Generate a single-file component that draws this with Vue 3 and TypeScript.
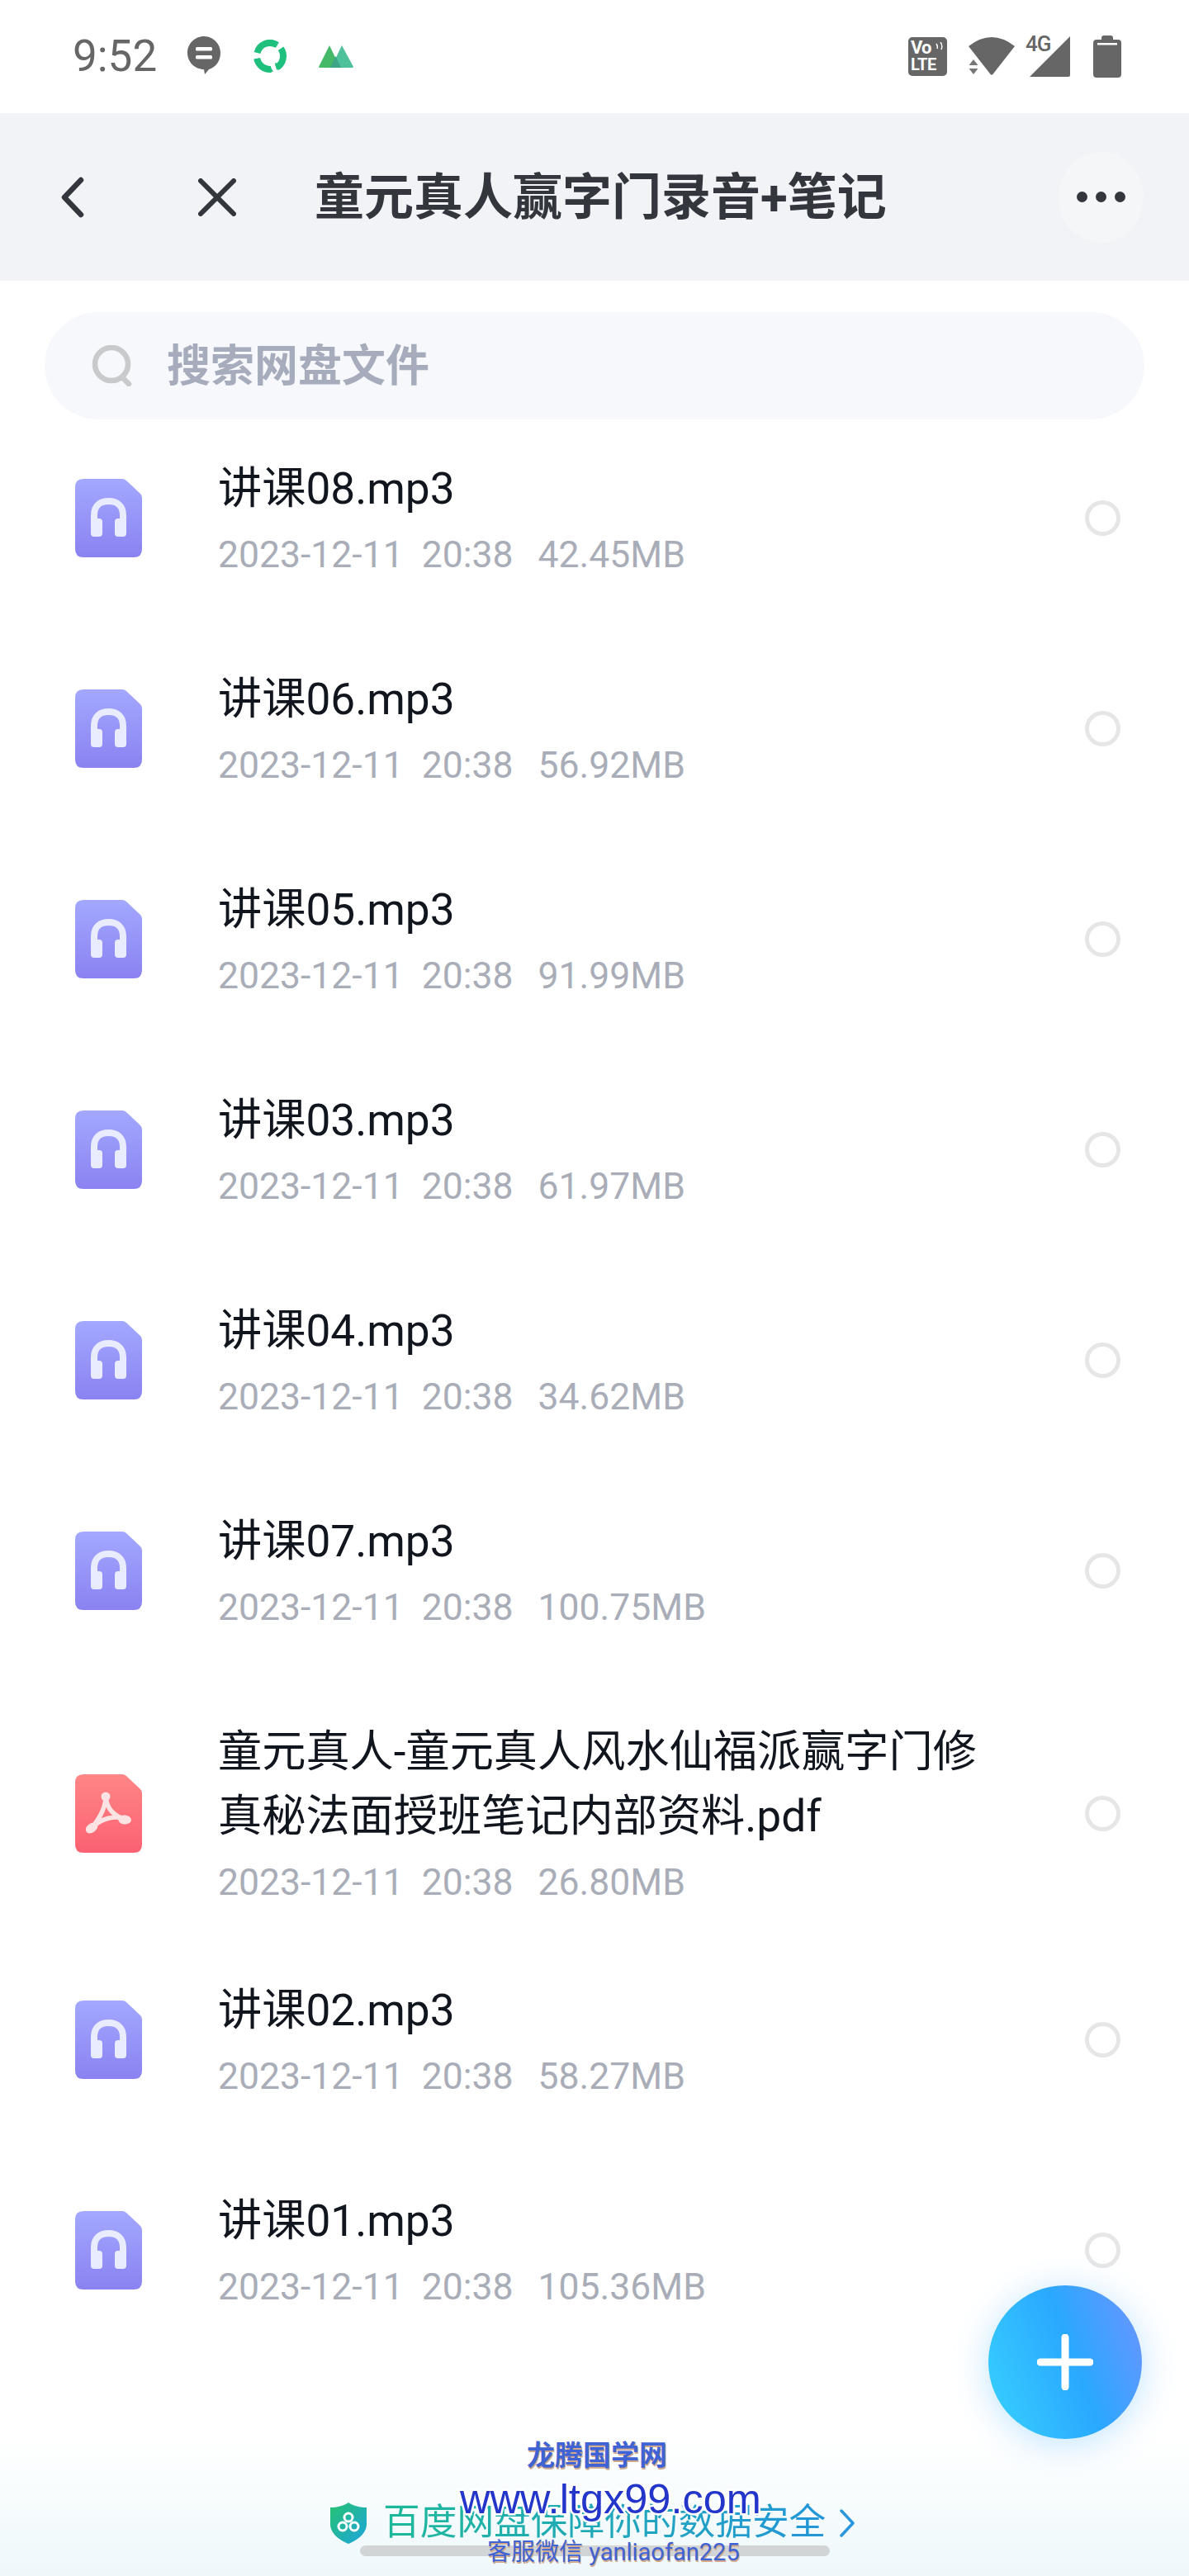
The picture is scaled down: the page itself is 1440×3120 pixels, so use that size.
<script setup lang="ts">
interface FileRow { name: string; size: string; kind: 'audio' | 'pdf' }
const files: FileRow[] = [
  { name: '讲课08.mp3', size: '42.45MB', kind: 'audio' },
  { name: '讲课06.mp3', size: '56.92MB', kind: 'audio' },
  { name: '讲课05.mp3', size: '91.99MB', kind: 'audio' },
  { name: '讲课03.mp3', size: '61.97MB', kind: 'audio' },
  { name: '讲课04.mp3', size: '34.62MB', kind: 'audio' },
  { name: '讲课07.mp3', size: '100.75MB', kind: 'audio' },
  { name: '童元真人-童元真人风水仙福派赢字门修真秘法面授班笔记内部资料.pdf', size: '26.80MB', kind: 'pdf' },
  { name: '讲课02.mp3', size: '58.27MB', kind: 'audio' },
  { name: '讲课01.mp3', size: '105.36MB', kind: 'audio' },
]
</script>

<template>
  <div class="page">
    <div class="status">
      <span class="time">9:52</span>
      <svg class="s-bubble" width="40" height="46" viewBox="0 0 40 46">
        <path d="M20 0C31 0 40 9 40 20C40 31 33 38 26 40L21 46L20 40C9 40 0 31 0 20C0 9 9 0 20 0Z" fill="#666" />
        <rect x="10" y="13" width="20" height="4.5" rx="1.5" fill="#fff" />
        <rect x="10" y="23" width="20" height="4.5" rx="1.5" fill="#fff" />
      </svg>
      <svg class="s-loop" width="44" height="40" viewBox="0 0 44 40">
        <g fill="none" stroke="#1fc07e" stroke-width="8">
          <path d="M6.500 15.900A16 16 0 0 1 30 6.100" />
          <path d="M35.100 10.800A16 16 0 0 1 30 33.900" />
          <path d="M23.400 35.900A16 16 0 0 1 6.200 22.800" />
        </g>
        <path d="M24 4L33 3L29 10Z M36 30L28 28L30 37Z M22 32L17 38L26 39Z" fill="#1fc07e" />
      </svg>
      <svg class="s-mount" width="42" height="27" viewBox="0 0 42 27">
        <path d="M13 0L26 27H1C0 27 0 26 0.500 25Z" fill="#45b968" />
        <path d="M28 0L41.500 25C42 26 42 27 41 27H15Z" fill="#4fc19a" />
        <path d="M20.500 13L27 27H14Z" fill="#3ea588" />
      </svg>
      <div class="status-right">
        <div class="volte">
          <span class="vo">Vo</span>
          <span class="lte">LTE</span>
          <svg class="waves" width="11" height="10" viewBox="0 0 11 10"><path d="M2 2Q4 5 3 8M7 0Q10 4 8 9" fill="none" stroke="#fff" stroke-width="1.500" /></svg>
        </div>
        <svg class="s-wifi" width="56" height="46" viewBox="0 0 56 46">
          <path d="M0 11Q28 -11 56 11L29 45.500H27Z" fill="#666" />
          <path d="M6 27L11.500 34H0.500Z M0.500 38H11.500L6 45Z" fill="#777" />
        </svg>
        <div class="signal">
          <svg width="50" height="50" viewBox="0 0 50 50"><path d="M50 1V48Q50 50 48 50H1Z" fill="#666" /></svg>
          <span class="fourg">4G</span>
        </div>
        <svg class="s-batt" width="34" height="51" viewBox="0 0 34 51">
          <path d="M10 3Q10 0 13 0H21Q24 0 24 3V5H30Q34 5 34 9V47Q34 51 30 51H4Q0 51 0 47V9Q0 5 4 5H10Z" fill="#666" />
          <rect x="5" y="9" width="24" height="2.500" fill="#fff" />
        </svg>
      </div>
    </div>

    <div class="nav">
      <svg class="back" width="30" height="50" viewBox="0 0 30 50"><path d="M25 4L5 25L25 46" fill="none" stroke="#33363d" stroke-width="6.500" stroke-linecap="round" stroke-linejoin="round" /></svg>
      <svg class="close" width="46" height="46" viewBox="0 0 46 46"><path d="M3 3L43 43M43 3L3 43" fill="none" stroke="#33363d" stroke-width="6" stroke-linecap="round" /></svg>
      <div class="nav-title">童元真人赢字门录音+笔记</div>
      <div class="more"><i></i><i></i><i></i></div>
    </div>

    <div class="search">
      <svg class="search-ico" width="52" height="50" viewBox="0 0 52 50">
        <circle cx="25" cy="23" r="20" fill="none" stroke="#c9cacc" stroke-width="6.500" />
        <path d="M38 39L46 47" stroke="#c9cacc" stroke-width="6.500" stroke-linecap="round" />
      </svg>
      <span class="search-text">搜索网盘文件</span>
    </div>

    <div class="list">
      <div v-for="f in files" :key="f.name" class="row" :class="{ tall: f.kind === 'pdf' }">
        <svg v-if="f.kind === 'audio'" class="ficon" width="81" height="95" viewBox="0 0 81 95">
          <defs>
            <linearGradient id="ga" x1="0" y1="0" x2="0" y2="1">
              <stop offset="0" stop-color="#a3a8ff" />
              <stop offset="1" stop-color="#8a82f1" />
            </linearGradient>
          </defs>
          <path d="M10 0H57Q60 0 62 2L79 18Q81 20 81 23V85Q81 95 71 95H10Q0 95 0 85V10Q0 0 10 0Z" fill="url(#ga)" />
          <path d="M23 52V44C23 32 31 27 40.500 27C50 27 58 32 58 44V52" fill="none" stroke="#e9ebff" stroke-width="8" />
          <rect x="19" y="48" width="14" height="22" rx="4" fill="#e9ebff" />
          <rect x="48" y="48" width="14" height="22" rx="4" fill="#e9ebff" />
        </svg>
        <svg v-else class="ficon" width="81" height="95" viewBox="0 0 81 95">
          <defs>
            <linearGradient id="gp" x1="0" y1="0" x2="0" y2="1">
              <stop offset="0" stop-color="#ff8686" />
              <stop offset="1" stop-color="#fb6173" />
            </linearGradient>
          </defs>
          <path d="M10 0H57Q60 0 62 2L79 18Q81 20 81 23V85Q81 95 71 95H10Q0 95 0 85V10Q0 0 10 0Z" fill="url(#gp)" />
          <path d="M37 27C37 36 34 48 20 65M37 27C38 38 44 50 62 55M20 65C30 54 48 49 62 54" fill="none" stroke="#fbe3e3" stroke-width="5.500" stroke-linecap="round" />
          <circle cx="37" cy="27" r="5.500" fill="#fbe3e3" />
          <ellipse cx="20" cy="65" rx="8" ry="5.500" transform="rotate(-35 20 65)" fill="#fbe3e3" />
          <ellipse cx="60" cy="55" rx="8" ry="5.500" transform="rotate(5 60 55)" fill="#fbe3e3" />
        </svg>
        <div class="ftext">
          <div class="fname">{{ f.name }}</div>
          <div class="fmeta"><span>2023-12-11</span><span class="ftime">20:38</span><span class="fsize">{{ f.size }}</span></div>
        </div>
        <div class="radio"></div>
      </div>
    </div>

    <div class="fab">
      <svg width="68" height="68" viewBox="0 0 68 68"><path d="M34 4V64M4 34H64" stroke="#fff" stroke-width="9" stroke-linecap="round" /></svg>
    </div>

    <div class="bottom">
      <svg class="shield" width="44" height="50" viewBox="0 0 44 50">
        <defs>
          <linearGradient id="gs" x1="0" y1="0" x2="1" y2="1">
            <stop offset="0" stop-color="#25c26e" />
            <stop offset="1" stop-color="#1ea5e0" />
          </linearGradient>
        </defs>
        <path d="M22 0C28 4 36 6 44 6V26C44 38 32 46 22 50C12 46 0 38 0 26V6C8 6 16 4 22 0Z" fill="url(#gs)" />
        <g fill="none" stroke="#fff" stroke-width="3"><circle cx="22" cy="18" r="5" /><circle cx="15" cy="29" r="5" /><circle cx="29" cy="29" r="5" /></g>
      </svg>
      <span class="safe">百度网盘保障你的数据安全</span>
      <svg class="chev" width="20" height="34" viewBox="0 0 20 34"><path d="M3 2L17 17L3 32" fill="none" stroke="#2a97dc" stroke-width="3.500" stroke-linecap="round" stroke-linejoin="round" /></svg>
    </div>
    <div class="home"></div>
    <div class="wm wm-a">龙腾国学网</div>
    <div class="wm wm-b">www.ltgx99.com</div>
    <div class="wm wm-c">客服微信 yanliaofan225</div>
  </div>
</template>

<style scoped>
.page {
  position: relative;
  width: 1440px;
  height: 3120px;
  overflow: hidden;
  background: #fff;
  font-family: Roboto, "Noto Sans CJK SC", sans-serif;
}
.status {
  height: 137px;
  display: flex;
  align-items: center;
  padding: 0 82px 0 88px;
  box-sizing: border-box;
}
.time { font-size: 53px; color: #666; width: 102px; line-height: 1; margin-top: -1px; }
.s-bubble { margin-left: 37px; margin-top: -3px; }
.s-loop { margin-left: 38px; margin-top: -1px; }
.s-mount { margin-left: 37px; margin-top: 0; }
.status-right { margin-left: auto; display: flex; align-items: center; }
.volte {
  position: relative;
  width: 47px;
  height: 47px;
  background: #666;
  border-radius: 5px;
  color: #fff;
  font-weight: 700;
  display: flex;
  flex-direction: column;
  padding: 2px 3px;
  box-sizing: border-box;
  margin-top: -1px;
}
.vo { font-size: 22px; line-height: 21px; letter-spacing: -1px; }
.lte { font-size: 20px; line-height: 21px; letter-spacing: -.5px; }
.waves { position: absolute; right: 4px; top: 6px; }
.s-wifi { margin-left: 26px; margin-top: -1px; }
.signal { position: relative; width: 50px; height: 50px; margin-left: 17px; margin-top: -1px; }
.signal svg { display: block; }
.fourg {
  position: absolute;
  left: -4px;
  top: -3px;
  font-size: 26px;
  line-height: 26px;
  font-weight: 500;
  color: #666;
  letter-spacing: -1px;
}
.s-batt { margin-left: 28px; margin-top: -1px; }

.nav {
  height: 203px;
  background: #f1f3f7;
  display: flex;
  align-items: center;
  padding-left: 73px;
  box-sizing: border-box;
}
.back { width: 30px; }
.close { margin-left: 137px; }
.nav-title {
  margin-left: 95px;
  font-size: 60px;
  font-weight: 700;
  color: #33363d;
  line-height: 1;
  margin-top: 2px;
}
.more {
  margin-left: auto;
  margin-right: 55px;
  width: 103px;
  height: 110px;
  border-radius: 50%;
  background: #f5f6f7;
  display: flex;
  align-items: center;
  justify-content: center;
  gap: 10px;
}
.more i { display: block; width: 13px; height: 13px; border-radius: 50%; background: #33363d; }

.search {
  margin: 38px 54px 0;
  height: 130px;
  border-radius: 65px;
  background: #f7f8fc;
  display: flex;
  align-items: center;
  padding-left: 56px;
}
.search-text { margin-left: 40px; font-size: 53px; font-weight: 700; color: #a7acbc; line-height: 1; margin-top: 3px; }

.list { padding: 44px 83px 0 91px; }
.row { display: flex; align-items: center; margin-bottom: 105px; }
.row.tall { margin-bottom: 85px; }
.ficon { flex: none; }
.ftext { margin-left: 92px; width: 940px; }
.fname { padding-top: 1px; font-size: 53.200px; line-height: 78px; color: #11151d; }
.fmeta {
  margin-top: 11px;
  font-size: 44.500px;
  line-height: 60px;
  color: #a9adb8;
  display: flex;
}
.ftime { margin-left: 22px; }
.fsize { margin-left: 30px; }
.radio {
  margin-left: auto;
  width: 43px;
  height: 43px;
  border: 5px solid #e6e6e6;
  border-radius: 50%;
  box-sizing: border-box;
  flex: none;
}

.fab {
  position: absolute;
  z-index: 2;
  left: 1197px;
  top: 2768px;
  width: 186px;
  height: 186px;
  border-radius: 50%;
  background: linear-gradient(70deg, #38d2ff 0%, #2aa8ff 55%, #6f93ff 100%);
  box-shadow: 0 6px 44px rgba(60, 170, 255, .32);
  display: flex;
  align-items: center;
  justify-content: center;
}

.bottom {
  position: absolute;
  left: 0;
  right: 0;
  bottom: 0;
  height: 170px;
  background: linear-gradient(180deg, rgba(238, 248, 252, 0) 0%, #eef8fb 100%);
  display: flex;
  align-items: flex-start;
  padding: 73px 0 0 400px;
  box-sizing: border-box;
}
.shield { margin-top: 8px; flex: none; }
.safe {
  margin-left: 20px;
  font-size: 44.700px;
  line-height: 64px;
  color: transparent;
  background: linear-gradient(90deg, #1db99a, #2396d8);
  -webkit-background-clip: text;
  background-clip: text;
}
.chev { margin-left: 16px; margin-top: 16px; flex: none; }
.home {
  position: absolute;
  left: 436px;
  top: 3083px;
  width: 569px;
  height: 13px;
  border-radius: 7px;
  background: #d2d5d6;
}
.wm { position: absolute; white-space: nowrap; }
.wm-a {
  left: 638px;
  top: 2955px;
  font-size: 34px;
  line-height: 38px;
  font-weight: 700;
  color: #3f62d4;
  text-shadow: 1px 2px 0 #d0a98c;
}
.wm-b {
  left: 557px;
  top: 2996px;
  font-family: "Liberation Sans", sans-serif;
  font-size: 50.500px;
  line-height: 62px;
  color: #2436c9;
  -webkit-text-stroke: 5px #fff;
  paint-order: stroke fill;
}
.wm-c {
  left: 590px;
  top: 3073px;
  font-size: 29px;
  line-height: 36px;
  color: #3f62d4;
  text-shadow: 1px 2px 0 #d0a98c;
}
</style>
